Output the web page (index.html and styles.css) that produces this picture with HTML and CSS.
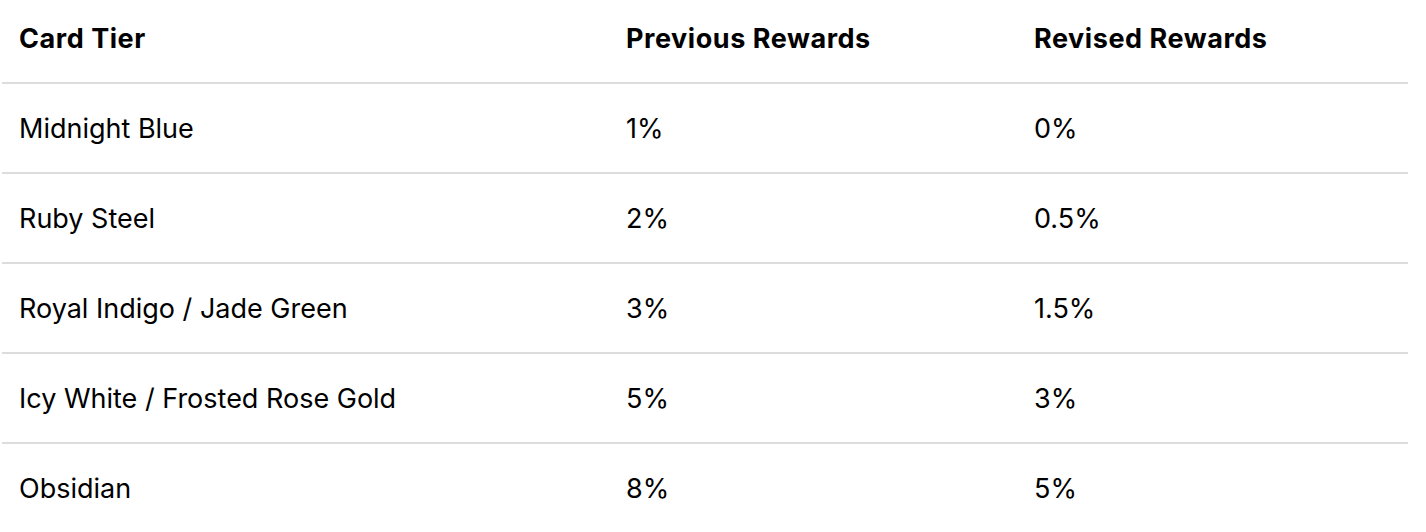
FILE: index.html
```html
<!DOCTYPE html>
<html lang="en">
<head>
<meta charset="utf-8">
<title>Card Tier Rewards</title>
<link rel="stylesheet" href="styles.css">
</head>
<body>
<div class="wrap">
<table class="rewards">
  <colgroup>
    <col class="c1"><col class="c2"><col class="c3">
  </colgroup>
  <thead>
    <tr><th>Card Tier</th><th>Previous Rewards</th><th>Revised Rewards</th></tr>
  </thead>
  <tbody>
    <tr><td>Midnight Blue</td><td>1%</td><td>0%</td></tr>
    <tr><td>Ruby Steel</td><td>2%</td><td>0.5%</td></tr>
    <tr><td>Royal Indigo / Jade Green</td><td>3%</td><td>1.5%</td></tr>
    <tr><td>Icy White / Frosted Rose Gold</td><td>5%</td><td>3%</td></tr>
    <tr><td>Obsidian</td><td>8%</td><td>5%</td></tr>
  </tbody>
</table>
</div>
</body>
</html>
```
FILE: styles.css
```css
html, body {
  margin: 0;
  padding: 0;
  background: #fff;
}
.wrap {
  padding-left: 2px;
}
.rewards {
  width: 1406px;
  border-collapse: collapse;
  table-layout: fixed;
  font-family: Inter, "Liberation Sans", sans-serif;
  font-size: 27px;
  color: #000;
}
.c1 { width: 607px; }
.c2 { width: 408px; }
.c3 { width: 391px; }
.rewards th,
.rewards td {
  text-align: left;
  padding: 0 0 0 17px;
  vertical-align: middle;
}
.rewards th {
  font-weight: 700;
  letter-spacing: 0.55px;
  height: 76px;
  padding-bottom: 6px;
  border-bottom: 2px solid #dcdcdc;
}
.rewards td {
  font-weight: 400;
  height: 88px;
  border-bottom: 2px solid #dcdcdc;
}
.rewards tbody tr:last-child td {
  border-bottom: none;
}
```
